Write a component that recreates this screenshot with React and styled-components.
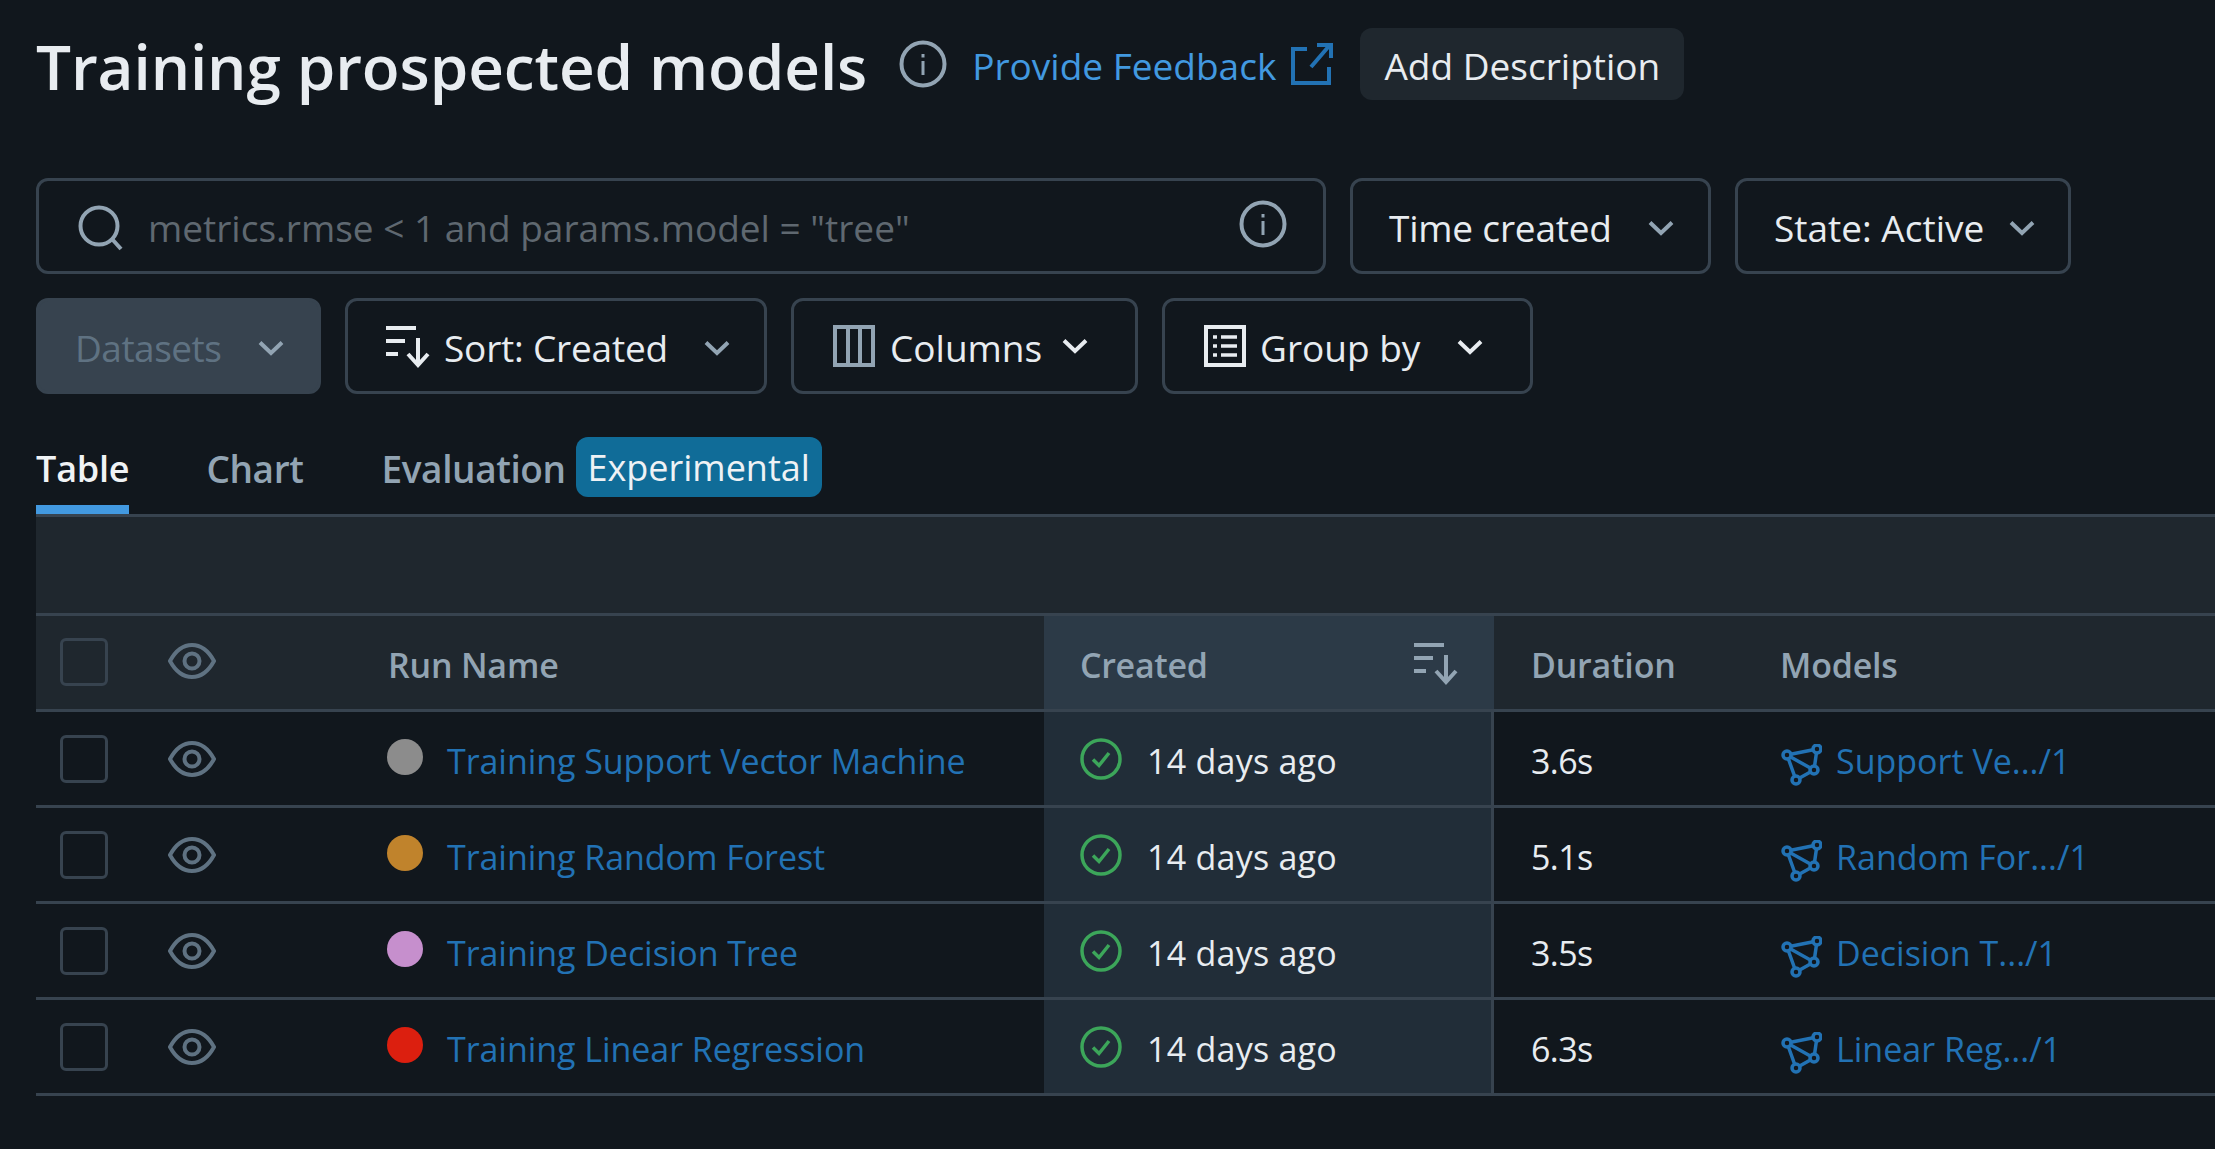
import React from "react";
import styled, { createGlobalStyle } from "styled-components";

const Global = createGlobalStyle`
  html, body { margin: 0; padding: 0; background: #11171d; }
  body { font-family: "Open Sans", "Noto Sans", sans-serif; overflow: hidden; }
  #root { min-height: 1149px; }
`;

const Page = styled.div`
  width: 2215px;
  height: 1149px;
  padding: 28px 0 0 36px;
  box-sizing: border-box;
  overflow: hidden;
  background: #11171d;
  font-size: 37px;
  color: #e8ecf0;
`;
const Header = styled.header`
  display: flex;
  align-items: center;
  height: 72px;
`;
const Title = styled.h1`
  margin: 0 32px 0 0;
  padding-top: 4px;
  font-size: 62px;
  font-weight: 600;
  letter-spacing: -0.1px;
  color: #e8ecf0;
  white-space: nowrap;
`;
const Feedback = styled.a`
  display: flex;
  align-items: center;
  gap: 15px;
  margin-left: 25px;
  color: #4299e0;
`;
const FeedbackText = styled.span`
  padding-top: 2px;
`;
const AddDescription = styled.button`
  margin-left: 27px;
  height: 72px;
  width: 324px;
  padding: 2px 0 0;
  border: 0;
  border-radius: 12px;
  background: #1f272e;
  color: #e8ecf0;
  font: inherit;
`;
const Toolbar = styled.div`
  display: flex;
  gap: 24px;
  margin-top: ${(p) => p.$top}px;
`;
const Search = styled.div`
  display: flex;
  align-items: center;
  width: 1290px;
  height: 96px;
  box-sizing: border-box;
  border: 3px solid #37434f;
  border-radius: 12px;
  padding: 0 36px 0 39px;
  gap: 24px;
`;
const Placeholder = styled.span`
  flex: 1;
  padding-top: 2px;
  color: #5f6870;
  white-space: nowrap;
`;
const Control = styled.button`
  display: flex;
  align-items: center;
  width: ${(p) => p.$w}px;
  height: 96px;
  box-sizing: border-box;
  padding: 0 0 0 ${(p) => p.$pad}px;
  border: 3px solid #37434f;
  border-radius: 12px;
  background: ${(p) => (p.$disabled ? "#37434f" : "transparent")};
  color: ${(p) => (p.$disabled ? "#5f7282" : "#e8ecf0")};
  font: inherit;
`;
const Label = styled.span`
  margin-left: ${(p) => p.$l || 0}px;
  padding-top: 2px;
  width: ${(p) => p.$w}px;
  letter-spacing: ${(p) => p.$ls || 0}px;
  text-align: left;
  white-space: nowrap;
`;
const Tabs = styled.nav`
  display: flex;
  align-items: center;
  height: 120px;
`;
const Tab = styled.div`
  position: relative;
  display: flex;
  align-items: center;
  height: 120px;
  padding-top: 28px;
  box-sizing: border-box;
  margin-right: ${(p) => p.$mr}px;
  color: ${(p) => (p.$active ? "#f0f3f5" : "#92a4b3")};
  font-size: ${(p) => (p.$active ? 36 : 37)}px;
  font-weight: 600;
  letter-spacing: ${(p) => (p.$active ? -0.2 : -0.4)}px;
  white-space: nowrap;
  &::after {
    content: "";
    display: ${(p) => (p.$active ? "block" : "none")};
    position: absolute;
    left: 0;
    right: 0;
    bottom: 0;
    height: 9px;
    background: #4299e0;
  }
`;
const Badge = styled.span`
  display: flex;
  align-items: center;
  justify-content: center;
  width: 246px;
  height: 60px;
  margin-top: 26px;
  border-radius: 12px;
  background: #106c98;
  color: #eef2f5;
  font-size: 36px;
  font-weight: 500;
`;
const Table = styled.section`
  border-top: 3px solid #37434f;
`;
const Band = styled.div`
  height: 99px;
  background: #1f272e;
  border-bottom: 3px solid #37434f;
  box-sizing: border-box;
`;
const Row = styled.div`
  display: grid;
  grid-template-columns: 108px 244px 656px 450px 286px 1fr;
  height: 96px;
  box-sizing: border-box;
  border-bottom: 3px solid #37434f;
  background: ${(p) => (p.$head ? "#1f272e" : "transparent")};
  color: ${(p) => (p.$head ? "#92a4b3" : "#e8ecf0")};
  font-size: 34px;
  font-weight: ${(p) => (p.$head ? 600 : 400)};
  letter-spacing: ${(p) => (p.$head ? -0.2 : 0)}px;
`;
const Cell = styled.div`
  display: flex;
  align-items: center;
  min-width: 0;
  padding-left: ${(p) => p.$pad || 0}px;
  padding-top: ${(p) => p.$pt || 0}px;
  padding-bottom: ${(p) => p.$pb || 0}px;
  letter-spacing: ${(p) => (p.$ls === undefined ? "inherit" : `${p.$ls}px`)};
  white-space: nowrap;
`;
const CreatedCell = styled(Cell)`
  padding-left: 36px;
  padding-right: 36px;
  padding-top: 4px;
  gap: 25px;
  letter-spacing: ${(p) => (p.$head ? -0.3 : 0.25)}px;
  justify-content: ${(p) => (p.$head ? "space-between" : "flex-start")};
  background: ${(p) => (p.$head ? "#2c3a47" : "#212d38")};
  box-shadow: ${(p) => (p.$head ? "none" : "inset -3px 0 0 #37434f")};
`;
const Checkbox = styled.span`
  display: block;
  width: 48px;
  height: 48px;
  box-sizing: border-box;
  border: 3px solid #37434f;
  border-radius: 6px;
`;
const Dot = styled.span`
  width: 36px;
  height: 36px;
  border-radius: 50%;
  margin: -7px 24px 0 -1px;
  background: ${(p) => p.$c};
  flex: none;
`;
const RunLink = styled.a`
  color: #2272b4;
  letter-spacing: -0.05px;
`;
const ModelLink = styled.a`
  display: flex;
  align-items: center;
  gap: 14px;
  color: #2272b4;
`;

const Info = ({ s = 48, c = "#92a4b3", top = 0 }) => (
  <svg width={s} height={s} viewBox="0 0 48 48" fill="none" style={{ flex: "none", marginTop: top }}>
    <circle cx="24" cy="24" r="21.5" stroke={c} strokeWidth="4" />
    <rect x="22.5" y="21" width="3" height="14" fill={c} />
    <rect x="22.5" y="14" width="3" height="3.5" fill={c} />
  </svg>
);
const SearchIcon = () => (
  <svg width="46" height="46" viewBox="0 0 46 46" fill="none" style={{ flex: "none", marginTop: 3 }}>
    <circle cx="21" cy="21" r="18.5" stroke="#92a4b3" strokeWidth="4" />
    <path d="M34 34 L43 44" stroke="#92a4b3" strokeWidth="4" />
  </svg>
);
const External = () => (
  <svg width="42" height="42" viewBox="0 0 42 42" fill="none" style={{ flex: "none" }}>
    <path d="M16 6 H2 V40 H38 V24" stroke="#2272b4" strokeWidth="4" />
    <path d="M20 24 L38 3 M26 2 H40 V15" stroke="#2272b4" strokeWidth="4" />
  </svg>
);
const Chevron = ({ c = "#92a4b3", top = 3 }) => (
  <svg width="26" height="16" viewBox="0 0 26 16" fill="none" style={{ marginTop: top, flex: "none" }}>
    <path d="M2 2.5 L13 13 L24 2.5" stroke={c} strokeWidth="4" />
  </svg>
);
const SortIcon = ({ c = "#e8ecf0", s = 44, top = 0 }) => (
  <svg width={s} height={s} viewBox="0 0 44 44" fill="none" style={{ flex: "none", marginTop: top }}>
    <path d="M0 4 H30 M0 17 H19 M0 30 H12" stroke={c} strokeWidth="4" />
    <path d="M32 14 V41 M22 30 L32 41 L42 30" stroke={c} strokeWidth="4" />
  </svg>
);
const ColumnsIcon = () => (
  <svg width="42" height="42" viewBox="0 0 42 42" fill="none" style={{ flex: "none" }}>
    <path d="M2 2 H40 V40 H2 Z M15 2 V40 M27 2 V40" stroke="#92a4b3" strokeWidth="4" />
  </svg>
);
const GroupIcon = () => (
  <svg width="42" height="42" viewBox="0 0 42 42" fill="none" style={{ flex: "none" }}>
    <rect x="2" y="2" width="38" height="38" stroke="#e8ecf0" strokeWidth="4" />
    <path d="M9 12 H13 M17 12 H33 M9 21 H13 M17 21 H33 M9 30 H13 M17 30 H33" stroke="#e8ecf0" strokeWidth="3.5" />
  </svg>
);
const Eye = () => (
  <svg width="48" height="36" viewBox="0 0 48 36" fill="none" style={{ flex: "none" }}>
    <path d="M2 18 C8 7 15 2 24 2 C33 2 40 7 46 18 C40 29 33 34 24 34 C15 34 8 29 2 18 Z" stroke="#5f7282" strokeWidth="4" />
    <circle cx="24" cy="18" r="7.5" stroke="#5f7282" strokeWidth="4" />
  </svg>
);
const Check = () => (
  <svg width="42" height="42" viewBox="0 0 42 42" fill="none" style={{ flex: "none", marginTop: -3 }}>
    <circle cx="21" cy="21" r="19" stroke="#3ca65a" strokeWidth="3.5" />
    <path d="M13 21.5 L19 27.5 L29 15" stroke="#3ca65a" strokeWidth="3.5" />
  </svg>
);
const ModelIcon = () => (
  <svg width="42" height="42" viewBox="0 0 42 42" fill="none" style={{ flex: "none", marginTop: 8 }}>
    <path d="M7 11 L37 5 L34 26 L16 36 L7 11 L34 26" stroke="#2272b4" strokeWidth="3.5" strokeLinejoin="round" />
    <g fill="#11171d" stroke="#2272b4" strokeWidth="3.5">
      <circle cx="7" cy="11" r="4" />
      <circle cx="37" cy="5" r="4" />
      <circle cx="34" cy="26" r="4" />
      <circle cx="16" cy="36" r="4" />
    </g>
  </svg>
);

const runs = [
  { name: "Training Support Vector Machine", color: "#8c8c8c", dur: "3.6s", model: "Support Ve.../1" },
  { name: "Training Random Forest", color: "#c0832c", dur: "5.1s", model: "Random For.../1" },
  { name: "Training Decision Tree", color: "#c68fcd", dur: "3.5s", model: "Decision T.../1" },
  { name: "Training Linear Regression", color: "#dc1f0f", dur: "6.3s", model: "Linear Reg.../1" },
];

export default function App() {
  return (
    <Page>
      <Global />
      <Header>
        <Title>Training prospected models</Title>
        <Info />
        <Feedback>
          <FeedbackText>Provide Feedback</FeedbackText>
          <External />
        </Feedback>
        <AddDescription>Add Description</AddDescription>
      </Header>
      <Toolbar $top={78}>
        <Search>
          <SearchIcon />
          <Placeholder>metrics.rmse &lt; 1 and params.model = "tree"</Placeholder>
          <Info top={-4} />
        </Search>
        <Control $w={361} $pad={36}>
          <Label $w={259} $ls={-0.2}>Time created</Label>
          <Chevron />
        </Control>
        <Control $w={336} $pad={36}>
          <Label $w={235}>State: Active</Label>
          <Chevron />
        </Control>
      </Toolbar>
      <Toolbar $top={24}>
        <Control $w={285} $pad={36} $disabled>
          <Label $w={183} $ls={-0.5}>Datasets</Label>
          <Chevron />
        </Control>
        <Control $w={422} $pad={38}>
          <SortIcon />
          <Label $l={14} $w={260} $ls={-0.2}>Sort: Created</Label>
          <Chevron />
        </Control>
        <Control $w={347} $pad={39}>
          <ColumnsIcon />
          <Label $l={15} $w={172}>Columns</Label>
          <Chevron c="#e8ecf0" top={0} />
        </Control>
        <Control $w={371} $pad={39}>
          <GroupIcon />
          <Label $l={14} $w={197}>Group by</Label>
          <Chevron c="#e8ecf0" top={2} />
        </Control>
      </Toolbar>
      <Tabs>
        <Tab $active $mr={77}>Table</Tab>
        <Tab $mr={78}>Chart</Tab>
        <Tab $mr={10}>Evaluation</Tab>
        <Badge>Experimental</Badge>
      </Tabs>
      <Table>
        <Band />
        <Row $head>
          <Cell $pad={24} $pb={2}><Checkbox /></Cell>
          <Cell $pad={24} $pb={3}><Eye /></Cell>
          <Cell $pt={4}>Run Name</Cell>
          <CreatedCell $head>
            Created
            <SortIcon c="#92a4b3" top={-4} />
          </CreatedCell>
          <Cell $pad={37} $pt={4}>Duration</Cell>
          <Cell $pt={4}>Models</Cell>
        </Row>
        {runs.map((r) => (
          <Row key={r.name}>
            <Cell $pad={24}><Checkbox /></Cell>
            <Cell $pad={24}><Eye /></Cell>
            <Cell $pt={4}>
              <Dot $c={r.color} />
              <RunLink>{r.name}</RunLink>
            </Cell>
            <CreatedCell>
              <Check />
              14 days ago
            </CreatedCell>
            <Cell $pad={37} $pt={4} $ls={-0.6}>{r.dur}</Cell>
            <Cell $pt={4}>
              <ModelLink>
                <ModelIcon />
                {r.model}
              </ModelLink>
            </Cell>
          </Row>
        ))}
      </Table>
    </Page>
  );
}
